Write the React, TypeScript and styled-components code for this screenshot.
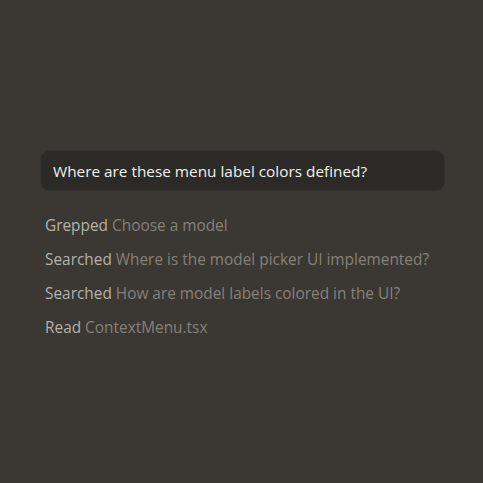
import React from "react";
import styled, { createGlobalStyle } from "styled-components";

const GlobalStyle = createGlobalStyle`
  html, body {
    margin: 0;
    padding: 0;
    background: #3b3833;
  }
  body {
    font-family: "Open Sans", "Noto Sans", sans-serif;
  }
`;

const steps = [
  { verb: "Grepped", detail: "Choose a model" },
  { verb: "Searched", detail: "Where is the model picker UI implemented?" },
  { verb: "Searched", detail: "How are model labels colored in the UI?" },
  { verb: "Read", detail: "ContextMenu.tsx" },
];

function App() {
  return (
    <>
      <GlobalStyle />
      <Page>
        <Prompt>Where are these menu label colors defined?</Prompt>
        <StepList>
          {steps.map((s, i) => (
            <Step key={i}>
              <Verb>{s.verb}</Verb> <Detail>{s.detail}</Detail>
            </Step>
          ))}
        </StepList>
      </Page>
    </>
  );
}

const Page = styled.div`
  width: 483px;
  height: 483px;
  box-sizing: border-box;
  padding: 150px 38px 0 40px;
  display: flex;
  flex-direction: column;
`;

const Prompt = styled.div`
  height: 41px;
  box-sizing: border-box;
  display: flex;
  align-items: center;
  padding: 0 12px;
  background: #2b2a26;
  border: 1px solid #34322e;
  border-radius: 9px;
  color: #f2f0ec;
  font-size: 15.35px;
`;

const StepList = styled.div`
  display: flex;
  flex-direction: column;
  padding: 18px 0 0 5px;
`;

const Step = styled.div`
  height: 34px;
  line-height: 34px;
  font-size: 15.4px;
  white-space: nowrap;
`;

const Verb = styled.span`
  color: #b4b1aa;
`;

const Detail = styled.span`
  color: #858179;
`;

export default App;
